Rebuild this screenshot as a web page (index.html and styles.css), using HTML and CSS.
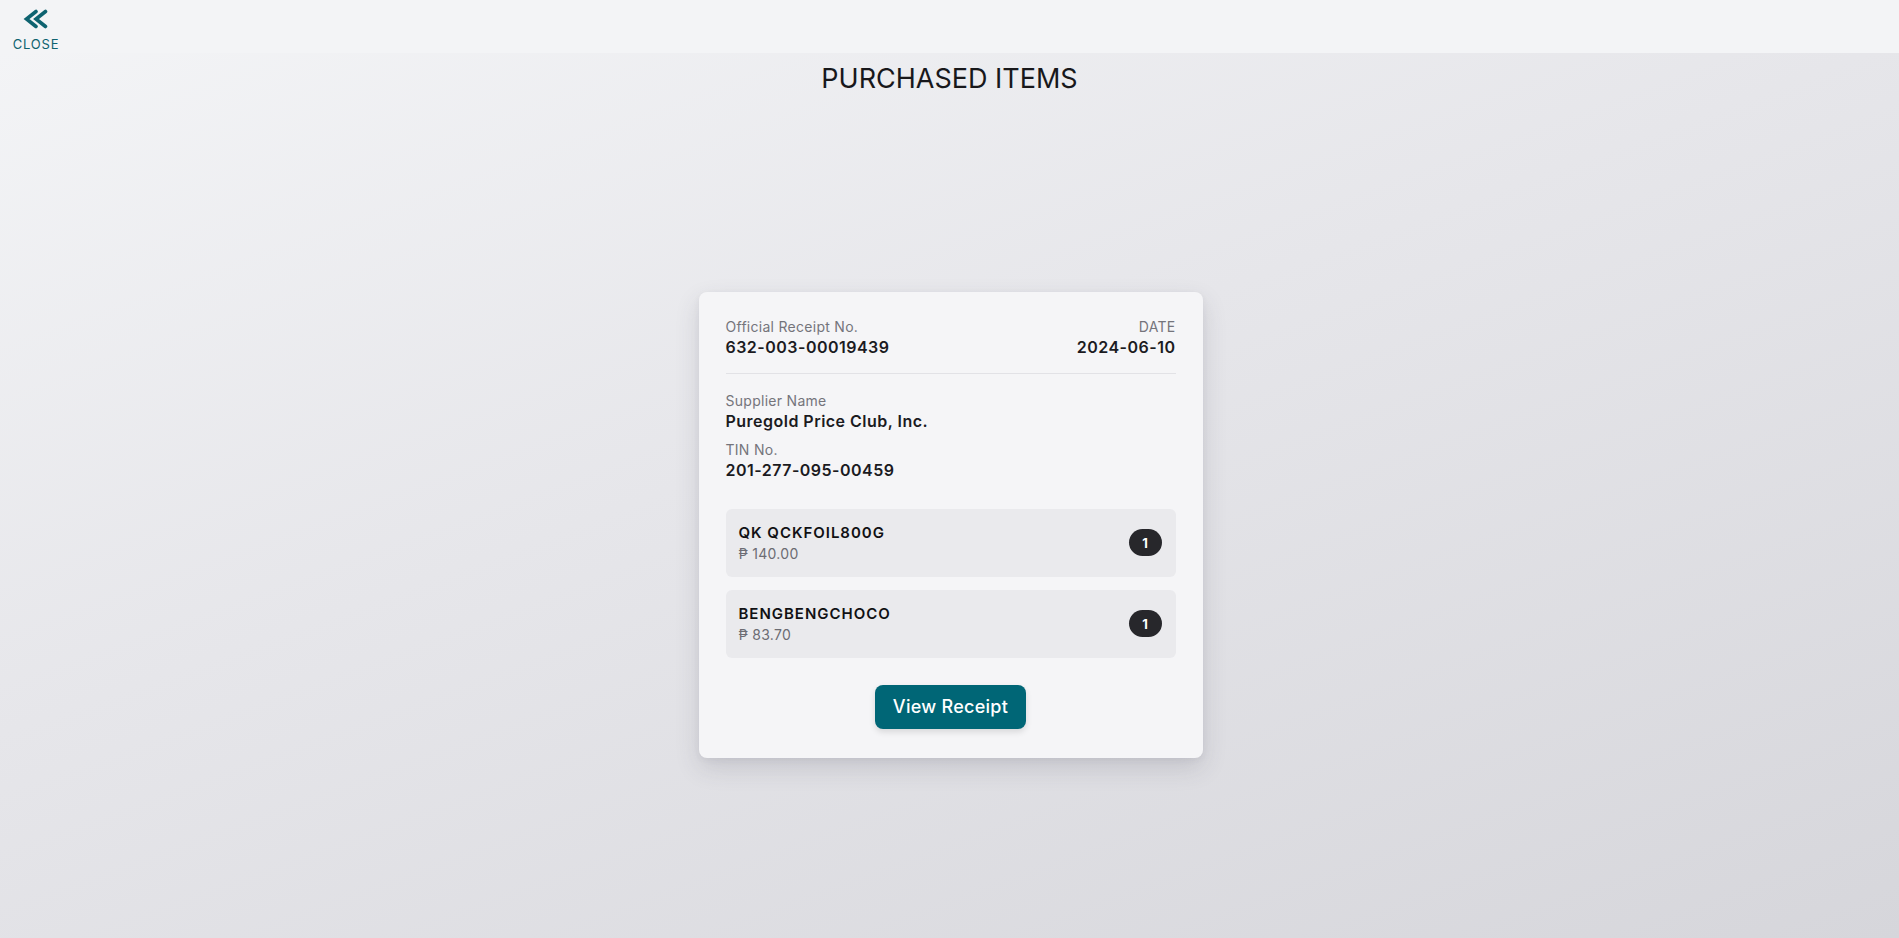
FILE: index.html
```html
<!DOCTYPE html>
<html lang="en">
<head>
<meta charset="utf-8">
<title>Purchased Items</title>
<link rel="stylesheet" href="styles.css">
</head>
<body>
<header class="topbar">
  <a class="close-btn" href="#">
    <svg class="close-icon" viewBox="0 0 26 20" width="26" height="20" aria-hidden="true">
      <polyline points="13,2.5 3.5,10 13,17.5" />
      <polyline points="22.5,2.5 13,10 22.5,17.5" />
    </svg>
    <span class="close-text">CLOSE</span>
  </a>
</header>
<main class="page">
  <h1 class="title">PURCHASED ITEMS</h1>
  <div class="stage">
    <section class="card">
      <div class="row-head">
        <div class="field">
          <div class="label">Official Receipt No.</div>
          <div class="value">632-003-00019439</div>
        </div>
        <div class="field right">
          <div class="label">DATE</div>
          <div class="value">2024-06-10</div>
        </div>
      </div>
      <div class="supplier">
        <div class="field">
          <div class="label">Supplier Name</div>
          <div class="value">Puregold Price Club, Inc.</div>
        </div>
        <div class="field tin">
          <div class="label">TIN No.</div>
          <div class="value">201-277-095-00459</div>
        </div>
      </div>
      <div class="items">
        <div class="item">
          <div class="item-info">
            <div class="item-name">QK QCKFOIL800G</div>
            <div class="item-price">₱ 140.00</div>
          </div>
          <span class="qty">1</span>
        </div>
        <div class="item">
          <div class="item-info">
            <div class="item-name">BENGBENGCHOCO</div>
            <div class="item-price">₱ 83.70</div>
          </div>
          <span class="qty">1</span>
        </div>
      </div>
      <div class="actions">
        <button class="view-btn" type="button">View Receipt</button>
      </div>
    </section>
  </div>
</main>
</body>
</html>
```
FILE: styles.css
```css
* { box-sizing: border-box; }
html, body { height: 100%; }
body {
  margin: 0;
  font-family: Inter, "Noto Sans", "Liberation Sans", sans-serif;
  color: #18181b;
  background: linear-gradient(160deg, #f4f5f7 0%, #e6e6ea 45%, #d6d6db 100%);
  min-height: 938px;
  display: flex;
  flex-direction: column;
}
.topbar {
  height: 53px;
  background: #f3f4f6;
  display: flex;
  align-items: flex-start;
  padding-left: 12px;
  padding-top: 9px;
  flex-shrink: 0;
}
.close-btn {
  display: flex;
  flex-direction: column;
  align-items: center;
  text-decoration: none;
  color: #0e6370;
  width: 48px;
}
.close-icon {
  display: block;
  width: 26px;
  height: 20px;
}
.close-icon polyline {
  fill: none;
  stroke: #0e6370;
  stroke-width: 3.6;
  stroke-linecap: round;
  stroke-linejoin: miter;
}
.close-text {
  font-size: 13px;
  line-height: 16px;
  letter-spacing: 0.06em;
  margin-top: 7px;
}
.page {
  flex: 1;
  display: flex;
  flex-direction: column;
}
.title {
  margin: 10px 0 0;
  text-align: center;
  font-size: 27px;
  line-height: 32px;
  font-weight: 400;
  color: #18181b;
}
.stage {
  flex: 1;
  display: flex;
  align-items: center;
  justify-content: center;
  padding-top: 16px;
  padding-left: 2px;
}
.card {
  width: 504px;
  background: #f5f5f7;
  border-radius: 8px;
  padding: 26px 27px 29px 27px;
  box-shadow: 0 10px 24px rgba(60, 60, 80, 0.16), 0 2px 6px rgba(60, 60, 80, 0.06);
}
.row-head {
  display: flex;
  justify-content: space-between;
  padding-bottom: 15px;
  border-bottom: 1px solid #e2e2e6;
}
.field.right { text-align: right; }
.label {
  font-size: 14px;
  line-height: 18px;
  color: #74747b;
  letter-spacing: 0.02em;
}
.value {
  font-size: 16px;
  line-height: 22px;
  font-weight: 600;
  color: #1b1b1f;
  letter-spacing: 0.03em;
}
.supplier { padding-top: 18px; }
.tin { margin-top: 9px; }
.items {
  margin-top: 28px;
  display: flex;
  flex-direction: column;
  gap: 13px;
}
.item {
  background: #eaeaed;
  border-radius: 6px;
  padding: 13px 14px 13px 13px;
  display: flex;
  align-items: center;
  justify-content: space-between;
}
.item-name {
  font-size: 15px;
  line-height: 21px;
  font-weight: 600;
  color: #111114;
  letter-spacing: 0.065em;
}
.item-price {
  font-size: 14px;
  line-height: 21px;
  color: #6c6c73;
  letter-spacing: 0.02em;
}
.qty {
  min-width: 33px;
  height: 27px;
  border-radius: 14px;
  background: #27272b;
  color: #ffffff;
  font-size: 13px;
  font-weight: 700;
  display: flex;
  align-items: center;
  justify-content: center;
}
.actions {
  margin-top: 27px;
  display: flex;
  justify-content: center;
}
.view-btn {
  height: 44px;
  padding: 0 18px;
  border: none;
  border-radius: 8px;
  background: #006676;
  color: #ffffff;
  font-family: inherit;
  font-size: 18px;
  font-weight: 500;
  letter-spacing: 0.015em;
  box-shadow: 0 3px 6px rgba(0, 0, 0, 0.12);
  cursor: pointer;
}
```
